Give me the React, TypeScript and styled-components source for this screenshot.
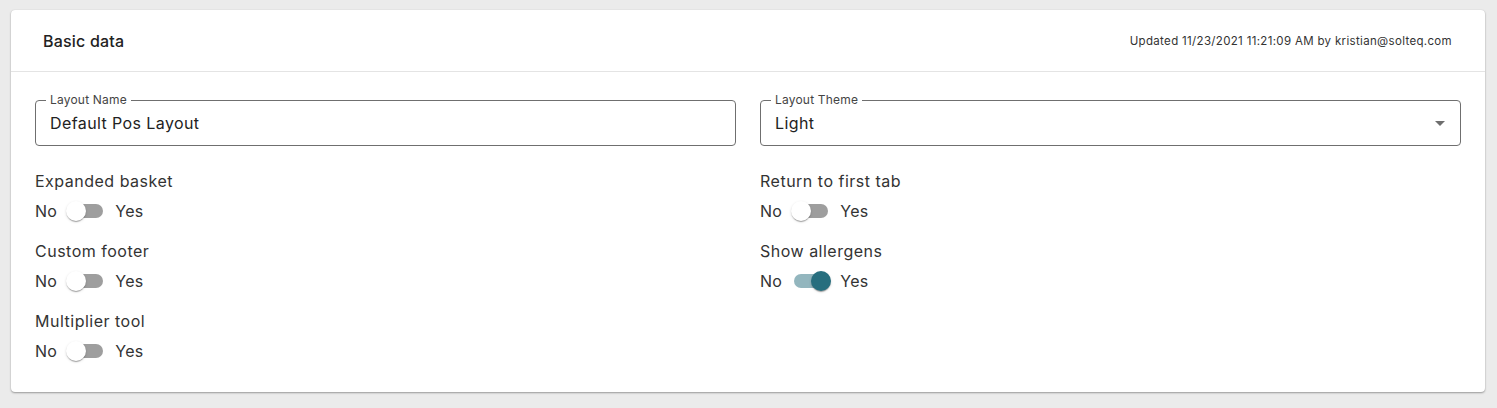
import styled, { createGlobalStyle } from "styled-components";
import { useState } from "react";

const GlobalStyle = createGlobalStyle`
    html, body {
        margin: 0;
        padding: 0;
        background-color: #ebebeb;
    }
    body {
        font-family: Inter, "Noto Sans", sans-serif;
        color: #333333;
    }
`;

const Page = styled.div`
    padding: 10px 12px 16px 11px;
`;

const Card = styled.div`
    background-color: #ffffff;
    border-radius: 4px;
    box-shadow: 0 1px 2px rgba(0, 0, 0, 0.35), 0 0 1px rgba(0, 0, 0, 0.12);
`;

const CardHeader = styled.div`
    display: flex;
    justify-content: space-between;
    align-items: center;
    height: 61px;
    padding: 0 33px 0 32px;
    border-bottom: 1px solid #e4e4e4;
`;

const CardTitle = styled.span`
    font-size: 16px;
    font-weight: 500;
    letter-spacing: 0.2px;
    color: #222222;
`;

const UpdatedInfo = styled.span`
    font-size: 11.5px;
    letter-spacing: 0.33px;
    color: #333333;
`;

const CardBody = styled.div`
    display: grid;
    grid-template-columns: 1fr 1fr;
    column-gap: 24px;
    padding: 28px 24px 22px;
`;

const Column = styled.div`
    display: flex;
    flex-direction: column;
`;

const Field = styled.div`
    position: relative;
    display: flex;
    align-items: center;
    height: 46px;
    box-sizing: border-box;
    padding: 0 14px;
    border: 1px solid #6f6f6f;
    border-radius: 4px;
    margin-bottom: 23px;
`;

const FieldLabel = styled.span`
    position: absolute;
    top: -8px;
    left: 10px;
    padding: 0 4px;
    background-color: #ffffff;
    font-size: 12px;
    line-height: 14px;
    letter-spacing: 0.2px;
    color: #444444;
`;

const FieldValue = styled.span`
    flex: 1;
    font-size: 16px;
    letter-spacing: 0.4px;
    color: #222222;
`;

const DropArrow = styled.span`
    width: 0;
    height: 0;
    margin-right: 1px;
    border-left: 5px solid transparent;
    border-right: 5px solid transparent;
    border-top: 5px solid #6e6e6e;
`;

const Group = styled.div`
    display: flex;
    flex-direction: column;
    margin-bottom: 9px;

    &:last-child {
        margin-bottom: 0;
    }
`;

const GroupLabel = styled.span`
    height: 23px;
    line-height: 24px;
    font-size: 16px;
    letter-spacing: 0.5px;
    color: #333333;
`;

const SwitchRow = styled.div`
    display: flex;
    align-items: center;
    height: 38px;
    font-size: 16px;
    letter-spacing: 0.3px;
    color: #333333;
`;

const SwitchRoot = styled.span`
    position: relative;
    display: inline-flex;
    width: 58px;
    height: 38px;
    box-sizing: border-box;
    padding: 12px;
    cursor: pointer;
`;

const SwitchTrack = styled.span<{ $on: boolean }>`
    width: 100%;
    height: 100%;
    border-radius: 7px;
    background-color: ${(p) => (p.$on ? "#276e7e" : "#000000")};
    opacity: ${(p) => (p.$on ? 0.5 : 0.38)};
`;

const SwitchThumb = styled.span<{ $on: boolean }>`
    position: absolute;
    top: 9px;
    left: ${(p) => (p.$on ? "29px" : "9px")};
    width: 20px;
    height: 20px;
    border-radius: 50%;
    background-color: ${(p) => (p.$on ? "#276e7e" : "#ffffff")};
    box-shadow: 0 2px 1px -1px rgba(0, 0, 0, 0.2), 0 1px 1px 0 rgba(0, 0, 0, 0.14),
        0 1px 3px 0 rgba(0, 0, 0, 0.12);
    transition: left 150ms;
`;

type ToggleProps = { label: string; initial: boolean };

function Toggle({ label, initial }: ToggleProps) {
    const [on, setOn] = useState(initial);
    return (
        <Group>
            <GroupLabel>{label}</GroupLabel>
            <SwitchRow>
                No
                <SwitchRoot onClick={() => setOn(!on)}>
                    <SwitchTrack $on={on} />
                    <SwitchThumb $on={on} />
                </SwitchRoot>
                Yes
            </SwitchRow>
        </Group>
    );
}

export default function App() {
    return (
        <Page>
            <GlobalStyle />
            <Card>
                <CardHeader>
                    <CardTitle>Basic data</CardTitle>
                    <UpdatedInfo>Updated 11/23/2021 11:21:09 AM by kristian@solteq.com</UpdatedInfo>
                </CardHeader>
                <CardBody>
                    <Column>
                        <Field>
                            <FieldLabel>Layout Name</FieldLabel>
                            <FieldValue>Default Pos Layout</FieldValue>
                        </Field>
                        <Toggle label="Expanded basket" initial={false} />
                        <Toggle label="Custom footer" initial={false} />
                        <Toggle label="Multiplier tool" initial={false} />
                    </Column>
                    <Column>
                        <Field>
                            <FieldLabel>Layout Theme</FieldLabel>
                            <FieldValue>Light</FieldValue>
                            <DropArrow />
                        </Field>
                        <Toggle label="Return to first tab" initial={false} />
                        <Toggle label="Show allergens" initial={true} />
                    </Column>
                </CardBody>
            </Card>
        </Page>
    );
}
